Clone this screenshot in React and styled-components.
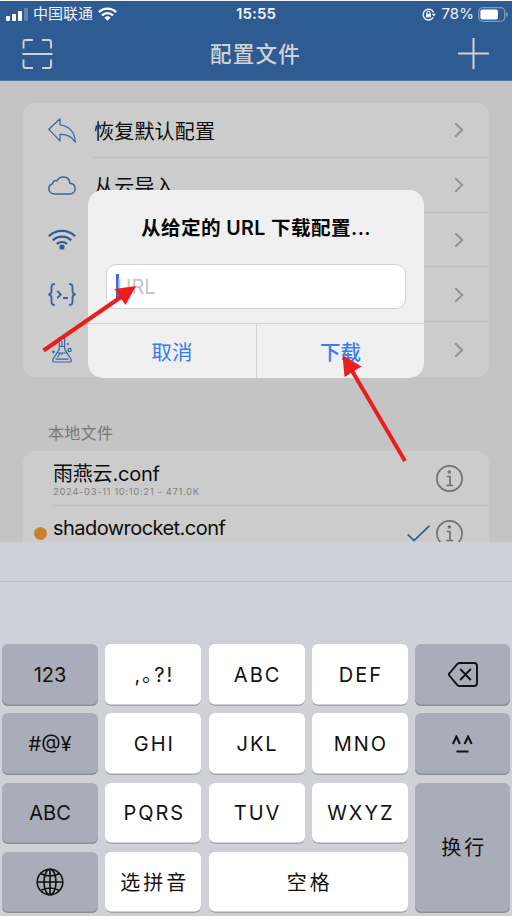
import React from "react";
import styled, { createGlobalStyle } from "styled-components";

const GlobalStyle = createGlobalStyle`
  *, *::before, *::after { box-sizing: border-box; }
  body {
    margin: 0;
    background: #c4c4c4;
    font-family: Inter, "Noto Sans CJK SC", sans-serif;
  }
  svg { display: block; flex: none; }
`;

const Screen = styled.div`
  position: relative;
  width: 512px;
  height: 916px;
  overflow: hidden;
  display: flex;
  flex-direction: column;
  background: #c4c4c4;
  border-top: 1px solid #f4f6f8;
`;

const Header = styled.header`
  flex: none;
  height: 80px;
  background: #2f5b93;
  border-bottom: 1px solid #5b7598;
`;

const StatusBar = styled.div`
  display: grid;
  grid-template-columns: 1fr auto 1fr;
  align-items: center;
  height: 26px;
  padding: 0 4px 0 6px;
  color: #eef3f8;
  font-size: 15px;
  line-height: 26px;
`;

const StatusGroup = styled.div`
  display: flex;
  align-items: center;
  justify-content: ${(p) => p.$align || "flex-start"};
  gap: ${(p) => p.$gap};
`;

const Carrier = styled.span`
  font-size: 15px;
`;

const Clock = styled.span`
  margin-right: 2px;
  font-size: 15px;
  font-weight: 600;
  letter-spacing: 0.1px;
`;

const Battery = styled.span`
  margin-right: -1px;
  font-size: 15px;
  letter-spacing: 0.1px;
`;

const NavBar = styled.div`
  display: flex;
  align-items: center;
  justify-content: space-between;
  height: 53px;
  padding: 0 23px 0 22px;
`;

const NavTitle = styled.h1`
  margin: 0;
  color: #d0d3d6;
  font-size: 21.5px;
  font-weight: 500;
  letter-spacing: 1.2px;
  line-height: 30px;
`;

const Content = styled.main`
  flex: none;
  height: 461px;
  padding: 22px 23px 0;
  overflow: hidden;
`;

const Card = styled.section`
  overflow: hidden;
  background: #cccccc;
  border-radius: 12px;
`;

const MenuRow = styled.div`
  display: flex;
  align-items: center;
  height: 54.8px;
  padding-left: 23px;
`;

const IconBox = styled.div`
  display: flex;
  align-items: center;
  justify-content: center;
  flex: none;
  width: 32px;
  color: #3565a5;
`;

const MenuBody = styled.div`
  display: flex;
  flex: 1;
  align-items: center;
  justify-content: space-between;
  height: 100%;
  margin-left: 15px;
  padding: 1px 25px 0 1px;
  color: #0c0c0c;
  font-size: 20px;
  letter-spacing: 0.2px;
  border-bottom: ${(p) => (p.$last ? "none" : "1px solid #bebebe")};
`;

const SectionLabel = styled.div`
  height: 74px;
  padding: 43px 0 0 25px;
  color: #777777;
  font-size: 16px;
  line-height: 26px;
  letter-spacing: 0.3px;
`;

const FileRow = styled.div`
  display: flex;
  height: 54.8px;
`;

const DotCell = styled.div`
  display: flex;
  justify-content: flex-end;
  flex: none;
  width: 24px;
  padding-top: 21px;
`;

const Dot = styled.span`
  width: 13px;
  height: 13px;
  border-radius: 50%;
  background: #c7802b;
`;

const FileBody = styled.div`
  display: flex;
  flex: 1;
  justify-content: space-between;
  margin-left: 6px;
  padding-right: 26px;
  border-bottom: 1px solid #bebebe;
`;

const FileText = styled.div`
  display: flex;
  flex-direction: column;
  padding-top: ${(p) => (p.$lead ? "10px" : "9px")};
`;

const FileName = styled.span`
  height: 25px;
  color: #0c0c0c;
  font-size: 20px;
  line-height: 26px;
  letter-spacing: ${(p) => p.$track};
`;

const FileMeta = styled.span`
  color: #818181;
  font-size: 9.5px;
  line-height: 11px;
  letter-spacing: 0.62px;
`;

const FileActions = styled.div`
  display: flex;
  align-items: center;
  gap: 6px;
  padding-top: 2px;
`;

const Dialog = styled.div`
  position: absolute;
  left: 88px;
  top: 189px;
  width: 336px;
  height: 188px;
  overflow: hidden;
  display: flex;
  flex-direction: column;
  background: #f0f0f0;
  border-radius: 15px;
`;

const DialogTitle = styled.h2`
  margin: 23px 0 0;
  color: #080808;
  font-size: 19.6px;
  font-weight: 600;
  line-height: 30px;
  letter-spacing: 0.4px;
  text-align: center;
  white-space: nowrap;
`;

const Field = styled.div`
  display: flex;
  align-items: center;
  height: 45px;
  margin: 21px 18px 0;
  padding-left: 9px;
  background: #ffffff;
  border: 1px solid #d3d3d3;
  border-radius: 10px;
`;

const Caret = styled.span`
  width: 2.5px;
  height: 26px;
  background: #4a63e0;
`;

const Placeholder = styled.span`
  margin-left: -2px;
  color: #c5c5c5;
  font-size: 20px;
`;

const DialogActions = styled.div`
  display: grid;
  grid-template-columns: 1fr 1fr;
  flex: 1;
  margin-top: 14px;
  border-top: 1px solid #d2d2d2;
`;

const DialogButton = styled.button`
  margin: 0;
  padding: 0;
  border: 0;
  border-left: ${(p) => (p.$divided ? "1px solid #d2d2d2" : "none")};
  background: transparent;
  color: #377cf0;
  font-family: inherit;
  font-size: 20.5px;
  font-weight: ${(p) => (p.$divided ? 500 : 400)};
`;

const Keyboard = styled.div`
  flex: none;
  height: 374px;
  background: linear-gradient(180deg, #ced1da 0 80px, #d0d1d7 130px, #d0d1d7 100%);
`;

const CandidateBar = styled.div`
  height: 40px;
  border-bottom: 1px solid #b8babe;
`;

const KeyGrid = styled.div`
  display: grid;
  grid-template-columns: repeat(4, 96px) 95px;
  grid-template-rows: repeat(4, 61.5px);
  gap: 7.8px 7.3px;
  padding: 62px 2px 0;
`;

const Key = styled.button`
  display: flex;
  align-items: center;
  justify-content: center;
  grid-column: ${(p) => p.$col || "auto"};
  grid-row: ${(p) => p.$row || "auto"};
  margin: 0;
  padding: 0 0 ${(p) => p.$lift || "0px"} ${(p) => p.$track || "0px"};
  border: 0;
  border-radius: 6px;
  background: ${(p) => (p.$dark ? "#a8adb9" : "#ffffff")};
  box-shadow: inset 0 -1.5px 0 ${(p) => (p.$dark ? "#8b8f99" : "#a3a4a8")};
  color: #111111;
  font-family: inherit;
  font-size: 20px;
  letter-spacing: ${(p) => p.$track || "0px"};
`;

const Annotations = styled.svg`
  position: absolute;
  left: 0;
  top: -1px;
  pointer-events: none;
`;

const SignalIcon = () => (
  <svg width="22" height="13" viewBox="0 0 22 13" fill="#fff">
    <rect x="0" y="8" width="4" height="5" rx="1" />
    <rect x="6" y="6" width="4" height="7" rx="1" />
    <rect x="12" y="3" width="4" height="10" rx="1" />
    <rect x="18" y="0" width="4" height="13" rx="1" opacity=".25" />
  </svg>
);

const StatusWifi = () => (
  <svg width="19" height="14" viewBox="0 0 19 14" fill="none" stroke="#fff" strokeWidth="2.4">
    <path d="M.9 5.1a12.4 12.4 0 0 1 17.2 0" />
    <path d="M4 8.3a8 8 0 0 1 11 0" />
    <path d="M9.5 13.8 6.4 10.7a4.5 4.5 0 0 1 6.2 0z" fill="#fff" stroke="none" />
  </svg>
);

const LockIcon = () => (
  <svg width="14" height="13" viewBox="0 0 14 13" fill="none" stroke="#eef3f8" strokeWidth="1.4">
    <path d="M11.600 4.600A5.400 5.400 0 1 0 11.200 9.400" />
    <path d="M9.800 5.800h4.000l-2 2.800z" fill="#eef3f8" stroke="none" />
    <rect x="4" y="5.800" width="5" height="3.500" fill="#eef3f8" stroke="none" />
    <path d="M5 6V4.800a1.500 1.500 0 0 1 3 0V6" strokeWidth="1.100" />
  </svg>
);

const BatteryIcon = () => (
  <svg width="30" height="15" viewBox="0 0 30 15">
    <rect x=".7" y=".7" width="26" height="13.6" rx="4" fill="none" stroke="#7e9abd" strokeWidth="1.3" />
    <rect x="2.400" y="2.500" width="17.600" height="10" rx="2" fill="#fff" />
    <path d="M28 5q2 .7 2 2.500T28 10z" fill="#7e9abd" />
  </svg>
);

const ScanIcon = () => (
  <svg width="31" height="30" viewBox="0 0 31 30" fill="none" stroke="#d0d3d6" strokeWidth="1.9">
    <path d="M1.5 9.5V3q0-2 2-2H11M20 1h7q2 0 2 2v6.5M1.5 20.500V27q0 2 2 2H11M20 29h7q2 0 2-2v-6.500M.5 15h30" />
  </svg>
);

const PlusIcon = () => (
  <svg width="31" height="31" viewBox="0 0 31 31" fill="none" stroke="#d0d3d6" strokeWidth="2">
    <path d="M15.500 0v31M0 15.500h31" />
  </svg>
);

const ChevronIcon = () => (
  <svg width="10" height="16" viewBox="0 0 10 16" fill="none" stroke="#939393" strokeWidth="2">
    <path d="m1.200 1.200 7 6.800-7 6.800" />
  </svg>
);

const ReplyIcon = () => (
  <svg width="28" height="25" viewBox="0 0 28 25" fill="none" stroke="currentColor" strokeWidth="1.2" strokeLinejoin="round">
    <path d="M.8 11.300 12 .8v6C20.500 7.800 27 13.500 27.300 24.200 24 18.500 19 16 12 16.300v6.500z" />
  </svg>
);

const CloudIcon = () => (
  <svg width="28" height="19" viewBox="0 0 28 19" fill="none" stroke="currentColor" strokeWidth="1.500">
    <path d="M7 18C3.200 18 .9 15.700.9 12.700c0-2.600 1.600-4.500 3.800-5C4.900 5.500 6.500 4.200 9 4.700 10.300 2 12.500.9 15.300.9c3.900 0 6.500 2.500 6.600 6.300 3.300.3 5.200 2.400 5.200 5.300 0 3.200-2.200 5.500-5.600 5.500z" />
  </svg>
);

const WifiIcon = () => (
  <svg width="28" height="21" viewBox="0 0 28 21" fill="none" stroke="#2d5b9b" strokeWidth="2.200">
    <path d="M.8 7.300a19 19 0 0 1 26.400 0M4.800 11.400a13.200 13.200 0 0 1 18.400 0M8.800 15a7.700 7.700 0 0 1 10.400 0" />
    <circle cx="14" cy="18" r="2.600" fill="#2d5b9b" stroke="none" />
  </svg>
);

const CodeIcon = () => (
  <svg width="28" height="23" viewBox="0 0 28 23" fill="none" stroke="currentColor" strokeWidth="1.900">
    <path d="M6.800 1C3.900 1 3.500 2 3.500 4.500v3.500c0 2-.8 3.200-3 3.500 2.200.3 3 1.500 3 3.500v3.500C3.500 21 3.900 22 6.800 22M21.200 1c2.900 0 3.300 1 3.300 3.500v3.500c0 2 .8 3.200 3 3.500-2.200.3-3 1.500-3 3.500v3.500c0 2.500-.4 3.500-3.300 3.500M9.200 7.800l3.600 3.700-3.600 3.700M15 15h5" />
  </svg>
);

const FlaskIcon = () => (
  <svg width="20" height="27" viewBox="0 0 20 27" fill="none" stroke="currentColor" strokeWidth="1.200">
    <path d="M6 1.500h8M7.300 1.500v11.800L1.100 23q-1 2.500 1 3h15.800q2-.5 1-3l-6.200-9.700V1.500M7.500 10.500h5M5.500 17h9.500M3.500 23.200h13M8 17.500l-2.500 4M10.500 17.500l-1 1.500M10 5v5" />
    <circle cx="1.500" cy="16" r=".8" />
    <circle cx="17.500" cy="14" r="1.600" />
    <circle cx="3" cy="8" r=".6" />
    <circle cx="16" cy="8" r=".5" />
  </svg>
);

const InfoIcon = () => (
  <svg width="27" height="27" viewBox="0 0 27 27" fill="none" stroke="#707070" strokeWidth="1.700">
    <circle cx="13.500" cy="13.500" r="12.600" />
    <circle cx="13.300" cy="7" r="1.700" fill="#707070" stroke="none" />
    <path d="M10.800 11.500h3.200v9M10.300 20.500h7" />
  </svg>
);

const CheckIcon = () => (
  <svg width="23" height="17" viewBox="0 0 23 17" fill="none" stroke="#305f9c" strokeWidth="1.800">
    <path d="m.8 9.600 6.300 6L22.300.8" />
  </svg>
);

const DeleteIcon = () => (
  <svg width="30" height="25" viewBox="0 0 30 25" fill="none" stroke="#111" strokeWidth="1.900" strokeLinecap="round" strokeLinejoin="round">
    <path d="M11.500 1H26q3 0 3 3v17q0 3-3 3H11.500q-1.200 0-2.100-.9L1.700 14q-1.500-1.500 0-3L9.400 1.900Q10.300 1 11.500 1zM12.700 7.500l9.600 10M22.300 7.500l-9.600 10" />
  </svg>
);

const FaceIcon = () => (
  <svg width="21" height="18" viewBox="0 0 21 18" fill="none" stroke="#111" strokeWidth="2">
    <path d="m.9 9 3.500-7.500L7.900 9M12.600 9l3.500-7.500L19.600 9M4.500 16.500h12" />
  </svg>
);

const GlobeIcon = () => (
  <svg width="28" height="28" viewBox="0 0 28 28" fill="none" stroke="#111" strokeWidth="1.600">
    <circle cx="14" cy="14" r="12.800" />
    <ellipse cx="14" cy="14" rx="6" ry="12.800" />
    <path d="M14 1v26M1 14h26M4.500 5.500q9.500 5 19 0M4.500 22.500q9.500-5 19 0" />
  </svg>
);

const MENU = [
  { label: "恢复默认配置", Icon: ReplyIcon },
  { label: "从云导入", Icon: CloudIcon },
  { label: "", Icon: WifiIcon },
  { label: "", Icon: CodeIcon },
  { label: "", Icon: FlaskIcon },
];

const KEYS = [
  { label: "123", dark: true },
  { label: ",｡?!", track: "2px", lift: "2px" },
  { label: "ABC", track: "2px" },
  { label: "DEF", track: "2px" },
  { icon: <DeleteIcon />, dark: true },
  { label: "#@¥", dark: true },
  { label: "GHI", track: "2px" },
  { label: "JKL", track: "2px" },
  { label: "MNO", track: "2px" },
  { icon: <FaceIcon />, dark: true },
  { label: "ABC", dark: true },
  { label: "PQRS", track: "2px" },
  { label: "TUV", track: "2px" },
  { label: "WXYZ", track: "2px" },
  { label: "换行", dark: true, track: "3px", lift: "2px", row: "3 / span 2", col: "5" },
  { icon: <GlobeIcon />, dark: true, lift: "2px", row: "4", col: "1" },
  { label: "选拼音", track: "3px", lift: "2px", row: "4", col: "2" },
  { label: "空格", track: "3px", lift: "2px", row: "4", col: "3 / span 2" },
];

export default function App() {
  return (
    <Screen>
      <GlobalStyle />
      <Header>
        <StatusBar>
          <StatusGroup $gap="5px">
            <SignalIcon />
            <Carrier>中国联通</Carrier>
            <StatusWifi />
          </StatusGroup>
          <Clock>15:55</Clock>
          <StatusGroup $align="flex-end" $gap="5px">
            <LockIcon />
            <Battery>78%</Battery>
            <BatteryIcon />
          </StatusGroup>
        </StatusBar>
        <NavBar>
          <ScanIcon />
          <NavTitle>配置文件</NavTitle>
          <PlusIcon />
        </NavBar>
      </Header>

      <Content>
        <Card>
          {MENU.map(({ label, Icon }, i) => (
            <MenuRow key={i}>
              <IconBox>
                <Icon />
              </IconBox>
              <MenuBody $last={i === MENU.length - 1}>
                <span>{label}</span>
                <ChevronIcon />
              </MenuBody>
            </MenuRow>
          ))}
        </Card>
        <SectionLabel>本地文件</SectionLabel>
        <Card>
          <FileRow>
            <DotCell />
            <FileBody>
              <FileText $lead>
                <FileName $track="-0.2px">雨燕云.conf</FileName>
                <FileMeta>2024-03-11 10:10:21 - 471.0K</FileMeta>
              </FileText>
              <FileActions>
                <InfoIcon />
              </FileActions>
            </FileBody>
          </FileRow>
          <FileRow>
            <DotCell>
              <Dot />
            </DotCell>
            <FileBody>
              <FileText>
                <FileName $track="-0.55px">shadowrocket.conf</FileName>
              </FileText>
              <FileActions>
                <CheckIcon />
                <InfoIcon />
              </FileActions>
            </FileBody>
          </FileRow>
        </Card>
      </Content>

      <Keyboard>
        <CandidateBar />
        <KeyGrid>
          {KEYS.map((k, i) => (
            <Key key={i} $dark={k.dark} $track={k.track} $lift={k.lift} $row={k.row} $col={k.col}>
              {k.icon || k.label}
            </Key>
          ))}
        </KeyGrid>
      </Keyboard>

      <Dialog>
        <DialogTitle>从给定的 URL 下载配置...</DialogTitle>
        <Field>
          <Caret />
          <Placeholder>URL</Placeholder>
        </Field>
        <DialogActions>
          <DialogButton>取消</DialogButton>
          <DialogButton $divided>下载</DialogButton>
        </DialogActions>
      </Dialog>

      <Annotations width="512" height="916" viewBox="0 0 512 916" fill="#e81f1c">
        <path d="M43.500 350.500 121 297" stroke="#e81f1c" strokeWidth="4" />
        <path d="M136 286 114.500 289 125.500 305z" />
        <path d="M405 461 351 369" stroke="#e81f1c" strokeWidth="4" />
        <path d="M342.500 355 344.500 377 361.500 366.500z" />
      </Annotations>
    </Screen>
  );
}
